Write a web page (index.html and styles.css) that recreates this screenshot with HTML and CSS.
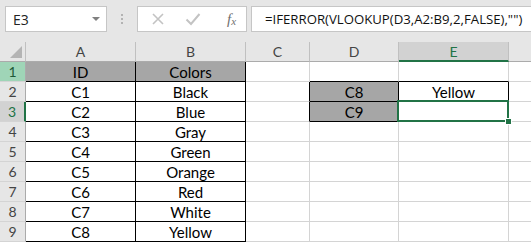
FILE: index.html
```html
<!DOCTYPE html>
<html>
<head>
<meta charset="utf-8">
<link rel="stylesheet" href="styles.css">
</head>
<body>
<div class="app">
  <div class="toolbar">
    <div class="namebox"><span class="name">E3</span><span class="drop"></span></div>
    <div class="dots"><i></i><i></i><i></i></div>
    <div class="fxbox">
      <svg class="ico" width="14" height="14" viewBox="0 0 14 14"><path d="M2 2 L12 12 M12 2 L2 12" stroke="#c3c3c3" stroke-width="1.6" fill="none"/></svg>
      <svg class="ico" width="16" height="14" viewBox="0 0 16 14"><path d="M1.5 7.5 L6 12 L14.5 2" stroke="#c3c3c3" stroke-width="2" fill="none"/></svg>
      <span class="fx">f<sub>x</sub></span>
    </div>
    <div class="formula">=IFERROR(VLOOKUP(D3,A2:B9,2,FALSE),"")</div>
  </div>
  <div class="sheet">
    <div class="c ch corner"><span class="tri"></span></div>
    <div class="c ch">A</div>
    <div class="c ch">B</div>
    <div class="c ch">C</div>
    <div class="c ch">D</div>
    <div class="c ch sel">E</div>
    <div class="c ch last"></div>

    <div class="c rh rh1">1</div>
    <div class="c t hd">ID</div>
    <div class="c t hd">Colors</div>
    <div class="c"></div>
    <div class="c bb"></div>
    <div class="c bb"></div>
    <div class="c last"></div>

    <div class="c rh">2</div>
    <div class="c t">C1</div>
    <div class="c t">Black</div>
    <div class="c br"></div>
    <div class="c t hd">C8</div>
    <div class="c t">Yellow</div>
    <div class="c last"></div>

    <div class="c rh rsel">3</div>
    <div class="c t">C2</div>
    <div class="c t">Blue</div>
    <div class="c br"></div>
    <div class="c t hd">C9</div>
    <div class="c bb"></div>
    <div class="c last"></div>

    <div class="c rh">4</div>
    <div class="c t">C3</div>
    <div class="c t">Gray</div>
    <div class="c"></div>
    <div class="c"></div>
    <div class="c"></div>
    <div class="c last"></div>

    <div class="c rh">5</div>
    <div class="c t">C4</div>
    <div class="c t">Green</div>
    <div class="c"></div>
    <div class="c"></div>
    <div class="c"></div>
    <div class="c last"></div>

    <div class="c rh">6</div>
    <div class="c t">C5</div>
    <div class="c t">Orange</div>
    <div class="c"></div>
    <div class="c"></div>
    <div class="c"></div>
    <div class="c last"></div>

    <div class="c rh">7</div>
    <div class="c t">C6</div>
    <div class="c t">Red</div>
    <div class="c"></div>
    <div class="c"></div>
    <div class="c"></div>
    <div class="c last"></div>

    <div class="c rh">8</div>
    <div class="c t">C7</div>
    <div class="c t">White</div>
    <div class="c"></div>
    <div class="c"></div>
    <div class="c"></div>
    <div class="c last"></div>

    <div class="c rh">9</div>
    <div class="c t">C8</div>
    <div class="c t">Yellow</div>
    <div class="c"></div>
    <div class="c"></div>
    <div class="c"></div>
    <div class="c last"></div>

    <div class="selection"><span class="handle"></span></div>
  </div>
</div>
</body>
</html>
```
FILE: styles.css
```css
* { box-sizing: border-box; }
html, body { margin: 0; padding: 0; background: #fff; }
.app {
  width: 531px;
  height: 242px;
  overflow: hidden;
  font-family: "Lato", "Liberation Sans", sans-serif;
}
.toolbar {
  height: 42px;
  background: #e6e6e6;
  display: flex;
  align-items: flex-start;
  padding-top: 6px;
  padding-left: 5px;
}
.namebox {
  width: 102px;
  height: 26px;
  background: #fff;
  border: 1px solid #c6c6c6;
  display: flex;
  align-items: center;
  justify-content: space-between;
  padding: 0 6px 0 7px;
  font-family: "Open Sans", "Liberation Sans", sans-serif;
  font-size: 14px;
  color: #222;
}
.drop {
  width: 0; height: 0;
  border-left: 4px solid transparent;
  border-right: 4px solid transparent;
  border-top: 4px solid #808080;
}
.dots {
  width: 30px;
  height: 26px;
  display: flex;
  flex-direction: column;
  align-items: center;
  justify-content: center;
  gap: 2px;
}
.dots i {
  display: block;
  width: 2px; height: 2px;
  background: #b3b3b3;
}
.fxbox {
  width: 110px;
  height: 26px;
  background: #fff;
  border: 1px solid #c6c6c6;
  display: flex;
  align-items: center;
  padding-left: 13px;
  gap: 20px;
}
.fx {
  font-family: "Liberation Serif", serif;
  font-style: italic;
  font-size: 15px;
  color: #6f6f6f;
  margin-left: 6px;
}
.fx sub { font-size: 11px; vertical-align: -1px; }
.formula {
  flex: 1;
  height: 26px;
  margin-left: 4px;
  margin-right: -10px;
  background: #fff;
  border: 1px solid #c6c6c6;
  padding-left: 13px;
  line-height: 24px;
  font-family: "Open Sans", "Liberation Sans", sans-serif;
  font-size: 13.2px;
  color: #111;
  white-space: nowrap;
}
.sheet {
  position: relative;
  display: grid;
  grid-template-columns: 26px 110px 110px 64px 89px 110px 1fr;
  grid-auto-rows: 20px;
  font-size: 15px;
}
.c {
  border-right: 1px solid #d4d4d4;
  border-bottom: 1px solid #d4d4d4;
  text-align: center;
  line-height: 20px;
  color: #000;
}
.c.last { border-right: none; }
.ch {
  background: #e6e6e6;
  border-right-color: #c0c0c0;
  border-bottom-color: #ababab;
  color: #444;
  font-size: 14px;
  line-height: 19px;
}
.ch.sel {
  background: #d2d2d2;
  border-bottom: 2px solid #217346;
  color: #217346;
}
.corner { position: relative; }
.tri {
  position: absolute;
  right: 3px; bottom: 3px;
  width: 0; height: 0;
  border-left: 12px solid transparent;
  border-bottom: 12px solid #b4b4b4;
}
.rh {
  background: #e6e6e6;
  border-right-color: #ababab;
  border-bottom-color: #d4d4d4;
  color: #444;
  font-size: 14px;
}
.rh1 { background: #9fd5b7; color: #1e5a37; }
.rsel { background: #d2d2d2; color: #217346; border-right: 2px solid #217346; }
.t { border-right-color: #000; border-bottom-color: #000; }
.hd { background: #a6a6a6; }
.bb { border-bottom-color: #000; }
.br { border-right-color: #000; }
.selection {
  position: absolute;
  left: 397px;
  top: 58px;
  width: 112px;
  height: 22px;
  border: 2px solid #217346;
}
.handle {
  position: absolute;
  right: -5px;
  bottom: -5px;
  width: 7px;
  height: 7px;
  background: #217346;
  border: 1px solid #fff;
}
```
